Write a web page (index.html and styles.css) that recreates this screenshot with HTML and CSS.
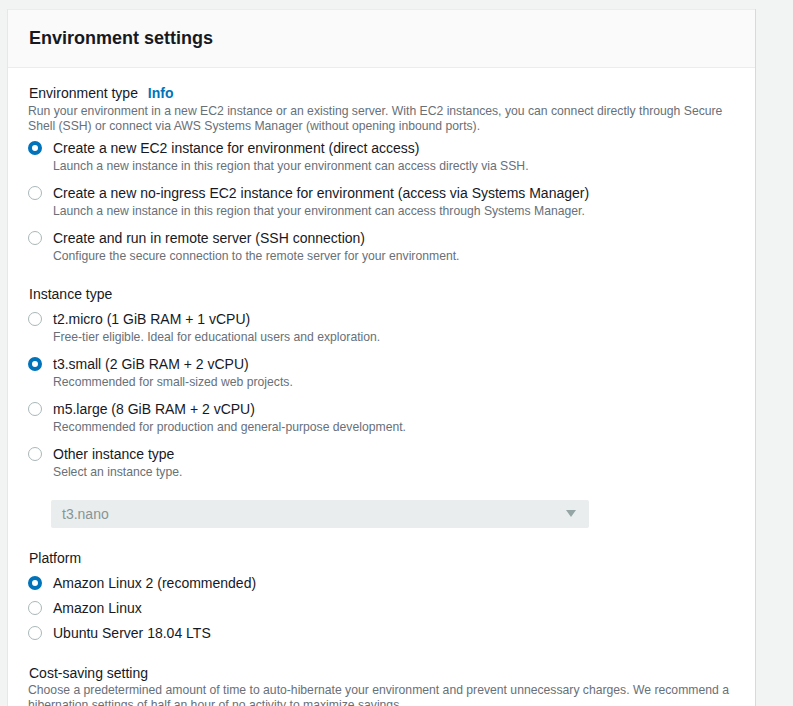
FILE: index.html
```html
<!DOCTYPE html>
<html>
<head>
<meta charset="utf-8">
<link rel="stylesheet" href="styles.css">
</head>
<body>
<div class="card">
  <div class="card-header"><h2>Environment settings</h2></div>
  <div class="card-body">
    <div class="group">
      <div class="heading">Environment type <a class="info">Info</a></div>
      <div class="desc">Run your environment in a new EC2 instance or an existing server. With EC2 instances, you can connect directly through Secure Shell (SSH) or connect via AWS Systems Manager (without opening inbound ports).</div>
      <div class="options">
        <div class="option"><span class="radio checked"></span><div><div class="label">Create a new EC2 instance for environment (direct access)</div><div class="sub">Launch a new instance in this region that your environment can access directly via SSH.</div></div></div>
        <div class="option"><span class="radio"></span><div><div class="label">Create a new no-ingress EC2 instance for environment (access via Systems Manager)</div><div class="sub">Launch a new instance in this region that your environment can access through Systems Manager.</div></div></div>
        <div class="option"><span class="radio"></span><div><div class="label">Create and run in remote server (SSH connection)</div><div class="sub">Configure the secure connection to the remote server for your environment.</div></div></div>
      </div>
    </div>
    <div class="group">
      <div class="heading">Instance type</div>
      <div class="options">
        <div class="option"><span class="radio"></span><div><div class="label">t2.micro (1 GiB RAM + 1 vCPU)</div><div class="sub">Free-tier eligible. Ideal for educational users and exploration.</div></div></div>
        <div class="option"><span class="radio checked"></span><div><div class="label">t3.small (2 GiB RAM + 2 vCPU)</div><div class="sub">Recommended for small-sized web projects.</div></div></div>
        <div class="option"><span class="radio"></span><div><div class="label">m5.large (8 GiB RAM + 2 vCPU)</div><div class="sub">Recommended for production and general-purpose development.</div></div></div>
        <div class="option"><span class="radio"></span><div><div class="label">Other instance type</div><div class="sub">Select an instance type.</div></div></div>
      </div>
      <div class="select"><span>t3.nano</span><span class="caret"></span></div>
    </div>
    <div class="group">
      <div class="heading">Platform</div>
      <div class="options compact">
        <div class="option"><span class="radio checked"></span><div class="label">Amazon Linux 2 (recommended)</div></div>
        <div class="option"><span class="radio"></span><div class="label">Amazon Linux</div></div>
        <div class="option"><span class="radio"></span><div class="label">Ubuntu Server 18.04 LTS</div></div>
      </div>
    </div>
    <div class="group">
      <div class="heading">Cost-saving setting</div>
      <div class="desc">Choose a predetermined amount of time to auto-hibernate your environment and prevent unnecessary charges. We recommend a hibernation settings of half an hour of no activity to maximize savings.</div>
    </div>
  </div>
</div>
</body>
</html>
```

FILE: styles.css
```css
html, body {
  margin: 0;
  background: #f2f3f3;
  font-family: "Liberation Sans", Arial, sans-serif;
  color: #16191f;
  overflow: hidden;
}
body {
  padding: 9px 0 0 8px;
  height: 706px;
  box-sizing: border-box;
}
.card {
  width: 747px;
  background: #fff;
  box-sizing: border-box;
  border-top: 1px solid #eaeded;
  box-shadow: 1px 0 0 0 #d5dbdb, -1px 0 0 0 #e4e8e8;
  min-height: 800px;
}
.card-header {
  height: 57px;
  background: #fafafa;
  border-bottom: 1px solid #eaeded;
  display: flex;
  align-items: center;
  padding: 0 21px;
}
.card-header h2 {
  margin: 0 0 2px 0;
  font-size: 18px;
  font-weight: 700;
  line-height: 24px;
}
.card-body {
  padding: 15px 20px 0 20px;
}
.group { margin-bottom: 20px; }
.heading {
  font-size: 14px;
  line-height: 20px;
  padding-left: 1px;
}
.info {
  color: #0073bb;
  font-weight: 700;
  margin-left: 6px;
}
.desc {
  font-size: 12.2px;
  line-height: 15px;
  color: #687078;
  margin-top: 0.5px;
}
.options {
  display: flex;
  flex-direction: column;
  gap: 9px;
  margin-top: 4.5px;
}
.options.compact { gap: 5px; margin-top: 5px; }
.option {
  display: flex;
  align-items: flex-start;
}
.radio {
  flex: none;
  width: 14px;
  height: 14px;
  box-sizing: border-box;
  border-radius: 50%;
  border: 1px solid #aab7b8;
  margin: 3px 11px 0 0;
  background: #fff;
}
.radio.checked {
  border: 4px solid #0073bb;
}
.label {
  font-size: 14px;
  line-height: 20px;
}
.sub {
  font-size: 12.2px;
  line-height: 16px;
  color: #687078;
}
.select {
  margin: 20px 0 0 23px;
  width: 538px;
  height: 28px;
  box-sizing: border-box;
  background: #eaeded;
  border-radius: 2px;
  display: flex;
  align-items: center;
  justify-content: space-between;
  padding: 0 13px 0 11px;
  font-size: 14px;
  color: #879596;
}
.caret {
  width: 0;
  height: 0;
  border-left: 5px solid transparent;
  border-right: 5px solid transparent;
  border-top: 7px solid #95a5a6;
}
```
